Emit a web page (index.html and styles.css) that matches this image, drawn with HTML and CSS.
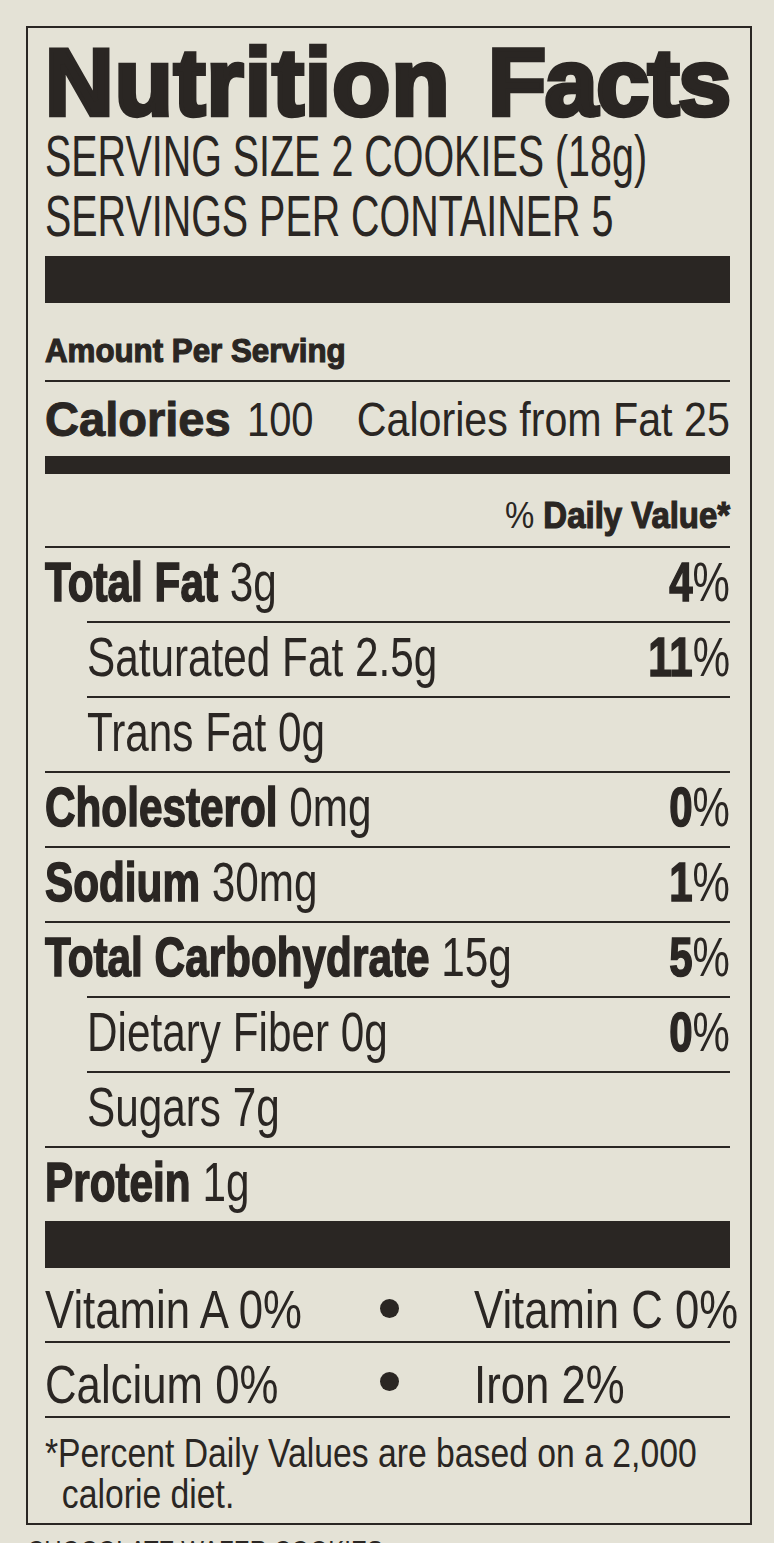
FILE: index.html
```html
<!DOCTYPE html>
<html lang="en">
<head>
<meta charset="utf-8">
<title>Nutrition Facts</title>
<link rel="stylesheet" href="styles.css">
</head>
<body>
<section class="label">
  <h1 class="title"><span class="w1">Nutrition</span> <span class="w2">Facts</span></h1>
  <div class="serving"><span class="sx">SERVING SIZE 2 COOKIES (18g)</span></div>
  <div class="serving"><span class="sx">SERVINGS PER CONTAINER 5</span></div>
  <div class="bar bar-top"></div>
  <div class="amount"><span class="sx">Amount Per Serving</span></div>
  <div class="calories">
    <div class="cal-left"><span class="sx cal-word">Calories</span><span class="sx cal-num">100</span></div>
    <span class="sx r cal-fat">Calories from Fat 25</span>
  </div>
  <div class="bar bar-mid"></div>
  <div class="dv"><span class="sx r">% <b>Daily Value*</b></span></div>

  <div class="row">
    <span class="sx name"><b>Total Fat</b> 3g</span>
    <span class="sx r pct"><b>4</b>%</span>
  </div>
  <div class="row sub">
    <span class="sx name">Saturated Fat 2.5g</span>
    <span class="sx r pct"><b>11</b>%</span>
  </div>
  <div class="row sub">
    <span class="sx name">Trans Fat 0g</span>
  </div>
  <div class="row">
    <span class="sx name"><b>Cholesterol</b> 0mg</span>
    <span class="sx r pct"><b>0</b>%</span>
  </div>
  <div class="row">
    <span class="sx name"><b>Sodium</b> 30mg</span>
    <span class="sx r pct"><b>1</b>%</span>
  </div>
  <div class="row">
    <span class="sx name"><b>Total Carbohydrate</b> 15g</span>
    <span class="sx r pct"><b>5</b>%</span>
  </div>
  <div class="row sub">
    <span class="sx name">Dietary Fiber 0g</span>
    <span class="sx r pct"><b>0</b>%</span>
  </div>
  <div class="row sub">
    <span class="sx name">Sugars 7g</span>
  </div>
  <div class="row">
    <span class="sx name"><b>Protein</b> 1g</span>
  </div>
  <div class="bar bar-bottom"></div>

  <div class="vit">
    <span class="sx">Vitamin A 0%</span>
    <span class="dot"></span>
    <span class="sx rt">Vitamin C 0%</span>
  </div>
  <div class="vit">
    <span class="sx">Calcium 0%</span>
    <span class="dot dot-low"></span>
    <span class="sx rt">Iron 2%</span>
  </div>
  <p class="foot"><span class="foot-text">*Percent Daily Values are based on a 2,000<br>calorie diet.</span></p>
</section>
<div class="below"><span class="sx">CHOCOLATE WAFER COOKIES</span></div>
</body>
</html>
```

FILE: styles.css
```css
html, body {
  margin: 0;
  padding: 0;
  background: #e4e2d6;
  overflow: hidden;
}

body {
  width: 774px;
  height: 1543px;
  font-family: "Liberation Sans", Arial, sans-serif;
  color: #2a2623;
}

.label {
  box-sizing: border-box;
  width: 726px;
  margin: 26px 0 0 26px;
  border: 2px solid #2a2623;
  padding: 0 20px 0 17px;
}

.sx {
  display: inline-block;
  max-width: 100%;
  white-space: nowrap;
  transform-origin: 0 50%;
}

.sx.r {
  transform-origin: 100% 50%;
}

b {
  font-weight: 700;
  -webkit-text-stroke: 1.6px currentColor;
}

/* Title */
.title {
  margin: 0;
  padding-top: 11px;
  font-size: 95px;
  line-height: 87px;
  font-weight: 700;
  word-spacing: 11px;
  white-space: nowrap;
  -webkit-text-stroke: 4.5px currentColor;
}

.title .w1 {
  letter-spacing: 1.1px;
}

.title .w2 {
  letter-spacing: -1.3px;
}

/* Serving info */
.serving {
  font-size: 58px;
  line-height: 60px;
}

.serving .sx {
  transform: scaleX(0.68);
}

.bar {
  background: #2a2623;
}

.bar-top {
  height: 47px;
  margin-top: 10px;
}

.bar-mid {
  height: 18px;
}

.bar-bottom {
  height: 47px;
}

.amount {
  font-size: 34px;
  line-height: 40px;
  font-weight: 700;
  -webkit-text-stroke: 1.2px currentColor;
  padding: 27px 0 10px;
  border-bottom: 2px solid #2a2623;
}

.amount .sx {
  transform: scaleX(0.92);
}

/* Calories */
.calories {
  display: flex;
  justify-content: space-between;
  font-size: 48px;
  line-height: 56px;
  padding: 10px 0 8px;
}

.cal-left {
  flex: 0 1 auto;
  min-width: 0;
  white-space: nowrap;
}

.cal-word {
  font-weight: 700;
  -webkit-text-stroke: 1px currentColor;
  transform: scaleX(0.98);
}

.cal-num {
  margin-left: 13px;
  transform: scaleX(0.83);
}

.cal-fat {
  flex: 0 0 auto;
  transform: scaleX(0.858);
}

/* Daily value header */
.dv {
  display: flex;
  justify-content: flex-end;
  font-size: 36px;
  line-height: 44px;
  padding: 20px 0 8px;
}

.dv .sx {
  transform: scaleX(0.915);
}

.dv b {
  -webkit-text-stroke: 1.2px currentColor;
}

/* Nutrient rows */
.row {
  display: flex;
  justify-content: space-between;
  border-top: 2px solid #2a2623;
  font-size: 56px;
  line-height: 67px;
  padding-bottom: 6px;
}

.row.sub {
  margin-left: 42px;
}

.row .name {
  flex: 0 1 auto;
  min-width: 0;
  transform: scaleX(0.755);
}

.row .pct {
  flex: 0 0 auto;
  transform: scaleX(0.75);
}

/* Vitamins */
.vit {
  display: grid;
  grid-template-columns: 336px 18px 1fr;
  align-items: start;
  font-size: 54px;
  line-height: 64px;
  padding-top: 9px;
  border-bottom: 2px solid #2a2623;
}

.vit .sx {
  justify-self: start;
  transform: scaleX(0.81);
}

.vit .rt {
  margin-left: 75px;
  max-width: calc(100% - 75px);
}

.dot {
  width: 19px;
  height: 19px;
  margin-left: -1px;
  border-radius: 50%;
  background: #2a2623;
  margin-top: 22px;
}

.dot.dot-low {
  margin-top: 20px;
}

/* Footnote */
.foot {
  margin: 0;
  font-size: 40px;
  line-height: 41px;
  padding: 15px 0 8px;
}

.foot-text {
  display: block;
  white-space: nowrap;
  padding-left: 20px;
  text-indent: -20px;
  transform: scaleX(0.843);
  transform-origin: 0 0;
}

/* Cut-off text below the panel */
.below {
  padding: 11px 0 0 27px;
  font-size: 30px;
  line-height: 30px;
  white-space: nowrap;
}

.below .sx {
  transform: scaleX(0.8);
}
```
